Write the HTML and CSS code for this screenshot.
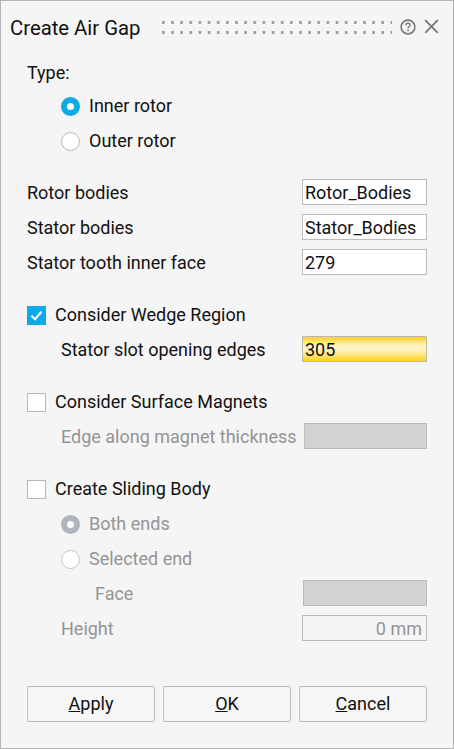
FILE: index.html
```html
<!DOCTYPE html>
<html lang="en">
<head>
<meta charset="utf-8">
<title>Create Air Gap</title>
<link rel="stylesheet" href="styles.css">
</head>
<body>
<div class="dialog">
  <header class="titlebar">
    <h1 class="title">Create Air Gap</h1>
    <div class="grip"></div>
    <svg class="help" width="16" height="16" viewBox="0 0 16 16" aria-label="Help">
      <circle cx="8" cy="8" r="6.9" fill="none" stroke="#777" stroke-width="1.6"/>
      <path d="M5.9 6.3c0-1.3 1-2 2.1-2s2.1.7 2.1 1.9c0 1.6-2.1 1.6-2.1 3.2" fill="none" stroke="#777" stroke-width="1.4"/>
      <rect x="7.2" y="10.6" width="1.6" height="1.6" fill="#777"/>
    </svg>
    <svg class="close" width="15" height="15" viewBox="0 0 15 15" aria-label="Close">
      <path d="M1.2 1.2l12.6 12.6M13.8 1.2l-12.6 12.6" fill="none" stroke="#777" stroke-width="1.8"/>
    </svg>
  </header>
  <main class="form">
    <div class="row">Type:</div>
    <div class="row indent-radio gap-7"><span class="radio on"></span>Inner rotor</div>
    <div class="row indent-radio gap-9"><span class="radio"></span>Outer rotor</div>

    <div class="row field gap-25"><span>Rotor bodies</span><span class="input">Rotor_Bodies</span></div>
    <div class="row field gap-9"><span>Stator bodies</span><span class="input">Stator_Bodies</span></div>
    <div class="row field gap-9"><span>Stator tooth inner face</span><span class="input">279</span></div>

    <div class="row gap-27"><span class="check on"><svg width="13" height="11" viewBox="0 0 13 11"><path d="M1.5 5.8l3.5 3.4 6.5-7.4" fill="none" stroke="#fff" stroke-width="2.2"/></svg></span>Consider Wedge Region</div>
    <div class="row field indent-sub gap-8"><span>Stator slot opening edges</span><span class="input active">305</span></div>

    <div class="row gap-27"><span class="check"></span>Consider Surface Magnets</div>
    <div class="row field indent-sub gap-8 off"><span>Edge along magnet thickness</span><span class="input blank narrow"></span></div>

    <div class="row gap-27"><span class="check"></span>Create Sliding Body</div>
    <div class="row indent-radio gap-9 off"><span class="radio on dim"></span>Both ends</div>
    <div class="row indent-radio gap-9 off"><span class="radio dim"></span>Selected end</div>
    <div class="row field indent-face gap-8 off"><span>Face</span><span class="input blank mid"></span></div>
    <div class="row field indent-sub gap-9 off"><span>Height</span><span class="input flat">0 mm</span></div>

    <div class="buttons">
      <button class="btn" type="button"><u>A</u>pply</button>
      <button class="btn" type="button"><u>O</u>K</button>
      <button class="btn" type="button"><u>C</u>ancel</button>
    </div>
  </main>
</div>
</body>
</html>
```

FILE: styles.css
```css
* { box-sizing: border-box; }
html, body { margin: 0; padding: 0; }
body {
  width: 454px;
  height: 749px;
  font-family: Roboto, "Noto Sans", "Liberation Sans", sans-serif;
  font-size: 18px;
  color: #111;
}
.dialog {
  width: 454px;
  height: 749px;
  background: #f5f5f5;
  border: 1px solid #b4b4b4;
  display: flex;
  flex-direction: column;
}
.titlebar {
  height: 59px;
  flex: none;
  display: flex;
  align-items: center;
  padding: 0 13px 6px 9px;
}
.title {
  margin: 0;
  font-size: 20.3px;
  font-weight: 400;
  line-height: 24px;
  width: 152px;
  flex: none;
}
.grip {
  width: 230px;
  height: 13px;
  flex: none;
  background-image: radial-gradient(circle at 1.5px 1.5px, #a0a0a0 1.5px, transparent 1.7px);
  background-size: 9.15px 10px;
  background-repeat: repeat;
}
.help { margin: -2px 0 0 8px; flex: none; }
.close { margin: -2px 0 0 8px; flex: none; }
.form {
  padding: 0 26px;
  display: flex;
  flex-direction: column;
}
.row {
  height: 26px;
  display: flex;
  align-items: center;
  line-height: 26px;
  white-space: nowrap;
}
.field {
  padding-top: 2px;
  line-height: 24px;
  justify-content: space-between;
}
.gap-7 { margin-top: 7px; }
.gap-8 { margin-top: 8px; }
.gap-9 { margin-top: 9px; }
.gap-25 { margin-top: 25px; }
.gap-27 { margin-top: 27px; }
.indent-radio { padding-left: 34px; }
.indent-sub { padding-left: 34px; }
.indent-face { padding-left: 68px; }
.off { color: #949494; }
.radio {
  width: 19px;
  height: 19px;
  margin-right: 9px;
  border-radius: 50%;
  border: 1.5px solid #b4b8c2;
  background: #fff;
  flex: none;
}
.radio.on {
  border: 6px solid #0aabe6;
}
.radio.dim { border-color: #c4c7cd; }
.radio.on.dim { border-color: #b0b4bd; }
.check {
  width: 19px;
  height: 19px;
  margin-right: 9px;
  border: 1.5px solid #b4b8c2;
  background: #fff;
  flex: none;
  display: flex;
  align-items: center;
  justify-content: center;
}
.check.on {
  background: #0aabe6;
  border-color: #0aabe6;
}
.input {
  width: 125px;
  height: 26px;
  margin-top: -2px;
  flex: none;
  border: 1px solid #bcbcbc;
  background: #fff;
  padding: 1px 2px 0;
  line-height: 24px;
  color: #111;
}
.input.active {
  border-color: #bdb9a8;
  background: linear-gradient(#ffd21e 0, #fff3c0 35%, #fff3c0 55%, #ffd21e 100%);
}
.input.blank { background: #d2d2d2; }
.input.narrow { width: 123px; }
.input.mid { width: 124px; }
.input.flat {
  background: #f5f5f5;
  color: #949494;
  text-align: right;
  padding-right: 4px;
}
.buttons {
  margin-top: 45px;
  display: flex;
  gap: 8px;
}
.btn {
  width: 128px;
  height: 36px;
  border: 1px solid #bcbcbc;
  border-radius: 2px;
  background: #f6f6f6;
  font: inherit;
  color: #111;
  padding: 0 0 2px;
}
```
